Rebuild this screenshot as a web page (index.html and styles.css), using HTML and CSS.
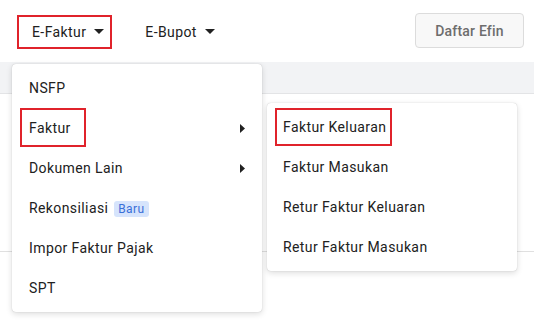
FILE: index.html
```html
<!DOCTYPE html>
<html lang="en">
<head>
    <meta charset="UTF-8">
    <meta name="viewport" content="width=device-width, initial-scale=1.0">
    <title>E-Faktur Menu</title>
    <link rel="stylesheet" href="styles.css">
</head>
<body>

    <header class="topbar">
        <nav class="nav">
            <div class="nav-item active">
                E-Faktur
                <svg class="caret" width="10" height="5" viewBox="0 0 10 5"><path d="M0 0h10L5 5z"/></svg>
            </div>
            <div class="nav-item">
                E-Bupot
                <svg class="caret" width="10" height="5" viewBox="0 0 10 5"><path d="M0 0h10L5 5z"/></svg>
            </div>
        </nav>
        <button class="btn-efin" type="button">Daftar Efin</button>
    </header>

    <div class="band"></div>
    <div class="content"></div>

    <!-- Main dropdown -->
    <ul class="menu menu-main">
        <li class="menu-item">NSFP</li>
        <li class="menu-item">
            <span class="highlight hl-faktur">Faktur</span>
            <svg class="arrow" width="5" height="9" viewBox="0 0 5 9"><path d="M0 0l5 4.5L0 9z"/></svg>
        </li>
        <li class="menu-item">
            Dokumen Lain
            <svg class="arrow" width="5" height="9" viewBox="0 0 5 9"><path d="M0 0l5 4.5L0 9z"/></svg>
        </li>
        <li class="menu-item">
            <span>Rekonsiliasi <span class="badge">Baru</span></span>
        </li>
        <li class="menu-item">Impor Faktur Pajak</li>
        <li class="menu-item">SPT</li>
    </ul>

    <!-- Faktur submenu -->
    <ul class="menu menu-sub">
        <li class="menu-item"><span class="highlight hl-keluaran">Faktur Keluaran</span></li>
        <li class="menu-item">Faktur Masukan</li>
        <li class="menu-item">Retur Faktur Keluaran</li>
        <li class="menu-item">Retur Faktur Masukan</li>
    </ul>

</body>
</html>
```

FILE: styles.css
```css
body {
    margin: 0;
    font-family: Roboto, "Liberation Sans", Arial, sans-serif;
    font-size: 14px;
    letter-spacing: 0.4px;
    color: #212121;
    background-color: #fff;
    position: relative;
    height: 330px;
    overflow: hidden;
}
.topbar {
    height: 62px;
    display: flex;
    align-items: center;
    justify-content: space-between;
    padding: 1px 10px 0 17px;
    box-sizing: border-box;
}
.nav {
    display: flex;
    gap: 18px;
}
.nav-item {
    display: flex;
    align-items: center;
    gap: 8px;
    height: 34px;
    padding: 0 6px 0 13px;
    border: 2px solid transparent;
    box-sizing: border-box;
}
.caret path, .arrow path {
    fill: #212121;
}
.btn-efin {
    width: 109px;
    height: 35px;
    margin-top: -2px;
    border: 1px solid #dcdcdc;
    border-radius: 4px;
    background-color: #f8f8f8;
    color: #6d6d6d;
    font-family: inherit;
    font-size: 14px;
    font-weight: 500;
    letter-spacing: 0.2px;
}
.band {
    height: 31px;
    background-color: #f2f3f5;
    border-bottom: 1px solid #e3e4e6;
}
.content {
    height: 157px;
    border-bottom: 1px solid #e0e0e0;
}
.menu {
    position: absolute;
    width: 250px;
    margin: 0;
    padding: 4px 0;
    list-style: none;
    background-color: #fff;
    border-radius: 4px;
    box-shadow: 0 0 1px rgba(0, 0, 0, 0.25), 0 2px 6px rgba(0, 0, 0, 0.14);
}
.menu-main {
    left: 12px;
    top: 64px;
}
.menu-sub {
    left: 267px;
    top: 103px;
}
.menu-item {
    height: 40px;
    display: flex;
    align-items: center;
    justify-content: space-between;
    padding: 0 17px;
}
.menu-sub .menu-item {
    padding: 0 16px;
}
.highlight {
    display: flex;
    align-items: center;
    border: 2px solid;
    box-sizing: border-box;
}
.nav-item.active, .highlight {
    border-color: #e0232b;
}
.hl-faktur {
    width: 66px;
    height: 39px;
    margin: -1px 0 0 -9px;
    padding-left: 7px;
}
.hl-keluaran {
    width: 117px;
    height: 38px;
    margin: 0 0 0 -8px;
    padding-left: 6px;
}
.badge {
    display: inline-block;
    margin-left: 2px;
    padding: 0 4px;
    height: 16px;
    line-height: 16px;
    font-size: 12px;
    color: #3a6fd8;
    background-color: #d6e4fc;
    border-radius: 3px;
}
```
